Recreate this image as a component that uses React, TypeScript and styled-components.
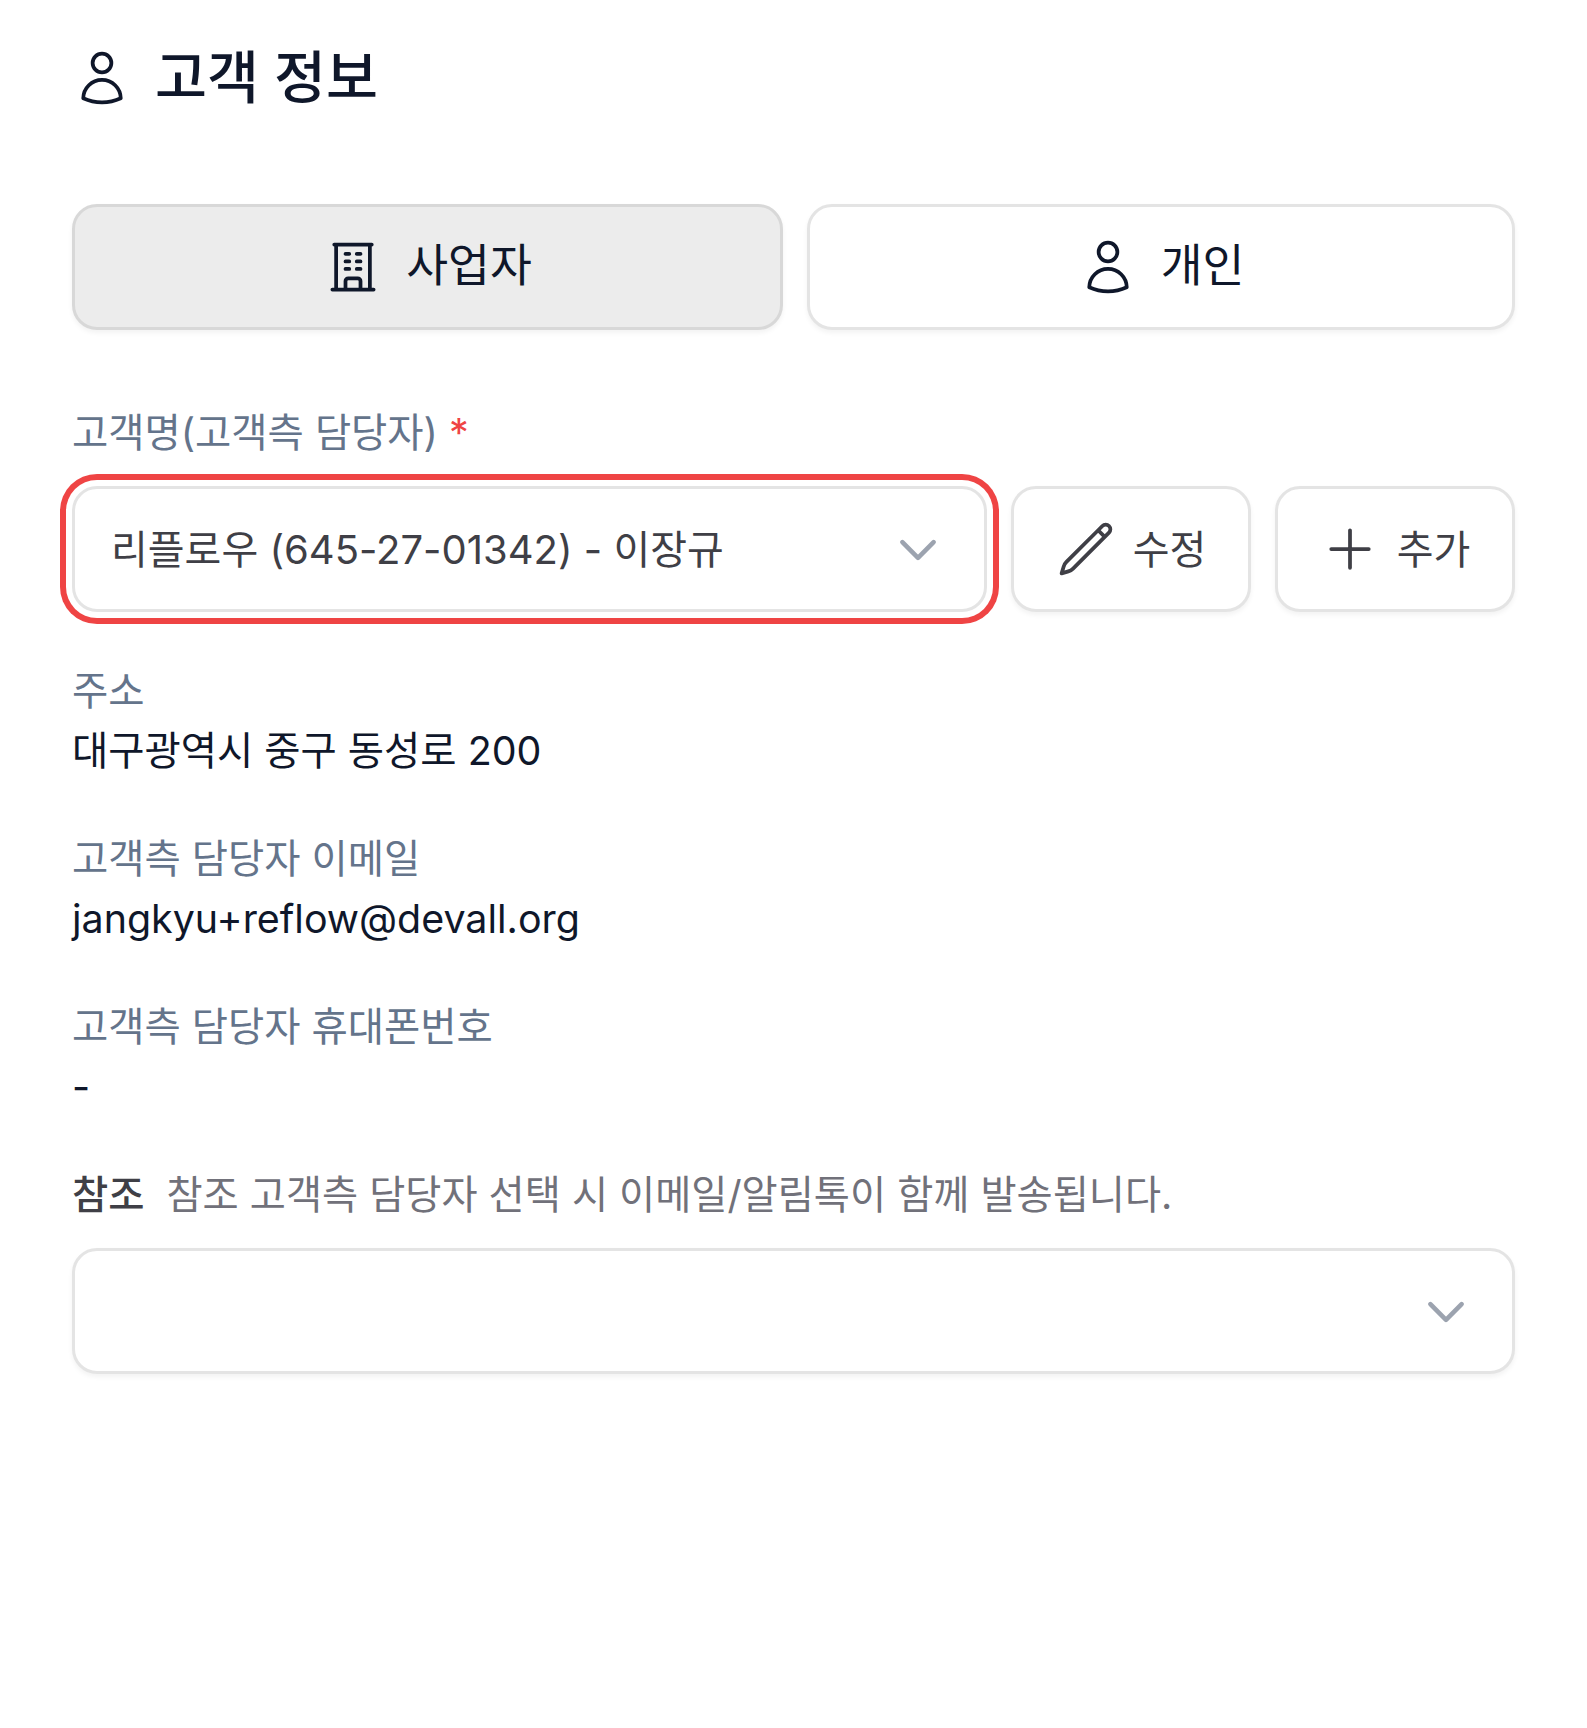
import React from 'react';
import styled, { createGlobalStyle } from 'styled-components';
import {
  HiOutlineUser,
  HiOutlineBuildingOffice,
  HiOutlinePencil,
  HiOutlinePlus,
  HiOutlineChevronDown,
} from 'react-icons/hi2';

const GlobalStyle = createGlobalStyle`
  html, body {
    margin: 0;
    padding: 0;
    background: #fff;
  }
  * {
    box-sizing: border-box;
  }
`;

const Page = styled.div`
  width: 1587px;
  min-height: 1728px;
  padding: 36px 72px 0 72px;
  font-family: Inter, "Noto Sans CJK KR", sans-serif;
  font-size: 39.4px;
  line-height: 60px;
  color: #0f172a;
`;

const Title = styled.h2`
  display: flex;
  align-items: center;
  gap: 23px;
  margin: 0 0 84px 0;
  font-size: 56.5px;
  line-height: 84px;
  font-weight: 500;
  color: #0f172a;
  svg {
    width: 60px;
    height: 60px;
    flex: none;
  }
`;

const ToggleRow = styled.div`
  display: flex;
  gap: 24px;
  margin-bottom: 73px;
`;

const Toggle = styled.div<{ $active?: boolean }>`
  flex: ${(p) => (p.$active ? '0 0 711px' : '1')};
  height: 126px;
  display: flex;
  align-items: center;
  justify-content: center;
  gap: 23px;
  padding-bottom: 2px;
  border: 3px solid ${(p) => (p.$active ? '#d8d8d8' : '#e4e4e4')};
  border-radius: 25px;
  background: ${(p) => (p.$active ? '#ececec' : '#fff')};
  box-shadow: 0 3px 5px rgba(0, 0, 0, 0.05);
  font-size: 45.5px;
  color: #0f172a;
  svg {
    width: 60px;
    height: 60px;
    flex: none;
    margin-top: 2px;
  }
`;

const Label = styled.div`
  color: #64748b;
`;

const Required = styled.span`
  color: #ef4444;
  margin-left: 11px;
`;

const CustomerRow = styled.div`
  display: flex;
  gap: 24px;
  margin: 23px 0 49px 0;
`;

const SelectBox = styled.div<{ $ring?: boolean }>`
  flex: 1;
  height: 126px;
  display: flex;
  align-items: center;
  justify-content: space-between;
  padding: 2px 41px 0 36px;
  border: 3px solid #e4e4e4;
  border-radius: 25px;
  background: #fff;
  font-size: 40px;
  color: #3f3f46;
  box-shadow: ${(p) =>
    p.$ring
      ? '0 0 0 6px #fff, 0 0 0 12px #ef4444'
      : '0 3px 5px rgba(0, 0, 0, 0.05)'};
  svg {
    width: 50px;
    height: 50px;
    margin-top: -1px;
    color: #9ca3af;
    stroke-width: 2.2;
    flex: none;
  }
`;

const ActionButton = styled.div`
  width: 240px;
  flex: none;
  height: 126px;
  display: flex;
  align-items: center;
  justify-content: center;
  gap: 17px;
  padding-top: 2px;
  border: 3px solid #e4e4e4;
  border-radius: 25px;
  background: #fff;
  font-size: 40px;
  color: #3f3f46;
  box-shadow: 0 3px 5px rgba(0, 0, 0, 0.05);
  svg {
    width: 60px;
    height: 60px;
    margin-top: -3px;
    flex: none;
  }
`;

const InfoBlock = styled.div`
  margin-bottom: 48px;
`;

const Value = styled.div`
  color: #0f172a;
`;

const CcHead = styled.div`
  display: flex;
  gap: 22px;
  margin-bottom: 23px;
`;

const CcLabel = styled.span`
  font-weight: 500;
  color: #3f3f46;
`;

const CcHint = styled.span`
  font-size: 39.27px;
  color: #71717a;
`;

export default function App() {
  return (
    <>
      <GlobalStyle />
      <Page>
        <Title>
          <HiOutlineUser />
          고객 정보
        </Title>

        <ToggleRow>
          <Toggle $active>
            <HiOutlineBuildingOffice />
            사업자
          </Toggle>
          <Toggle>
            <HiOutlineUser />
            개인
          </Toggle>
        </ToggleRow>

        <Label>
          고객명(고객측 담당자)<Required>*</Required>
        </Label>
        <CustomerRow>
          <SelectBox $ring>
            리플로우 (645-27-01342) - 이장규
            <HiOutlineChevronDown />
          </SelectBox>
          <ActionButton>
            <HiOutlinePencil />
            수정
          </ActionButton>
          <ActionButton>
            <HiOutlinePlus />
            추가
          </ActionButton>
        </CustomerRow>

        <InfoBlock>
          <Label>주소</Label>
          <Value>대구광역시 중구 동성로 200</Value>
        </InfoBlock>
        <InfoBlock>
          <Label>고객측 담당자 이메일</Label>
          <Value>jangkyu+reflow@devall.org</Value>
        </InfoBlock>
        <InfoBlock>
          <Label>고객측 담당자 휴대폰번호</Label>
          <Value>-</Value>
        </InfoBlock>

        <CcHead>
          <CcLabel>참조</CcLabel>
          <CcHint>참조 고객측 담당자 선택 시 이메일/알림톡이 함께 발송됩니다.</CcHint>
        </CcHead>
        <SelectBox>
          <span />
          <HiOutlineChevronDown />
        </SelectBox>
      </Page>
    </>
  );
}
